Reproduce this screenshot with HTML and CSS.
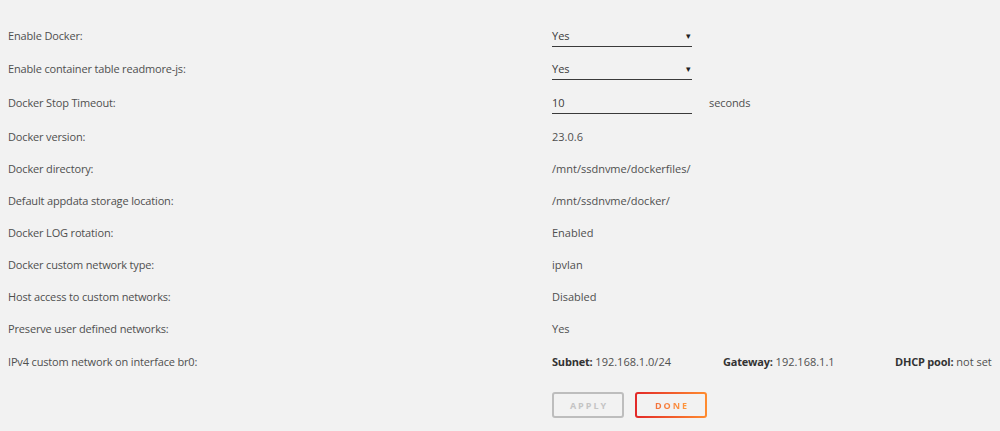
FILE: index.html
```html
<!DOCTYPE html>
<html lang="en">
<head>
    <meta charset="UTF-8">
    <title>Docker Settings</title>
    <link rel="stylesheet" href="styles.css">
</head>
<body>
    <form class="settings">
        <div class="row control">
            <div class="label">Enable Docker:</div>
            <div class="value">
                <div class="select">Yes<span class="arrow">&#9662;</span></div>
            </div>
        </div>
        <div class="row control">
            <div class="label">Enable container table readmore-js:</div>
            <div class="value">
                <div class="select">Yes<span class="arrow">&#9662;</span></div>
            </div>
        </div>
        <div class="row control spaced">
            <div class="label">Docker Stop Timeout:</div>
            <div class="value">
                <div class="select">10</div>
                <span class="unit">seconds</span>
            </div>
        </div>
        <div class="row">
            <div class="label">Docker version:</div>
            <div class="value">23.0.6</div>
        </div>
        <div class="row">
            <div class="label">Docker directory:</div>
            <div class="value">/mnt/ssdnvme/dockerfiles/</div>
        </div>
        <div class="row">
            <div class="label">Default appdata storage location:</div>
            <div class="value">/mnt/ssdnvme/docker/</div>
        </div>
        <div class="row">
            <div class="label">Docker LOG rotation:</div>
            <div class="value">Enabled</div>
        </div>
        <div class="row">
            <div class="label">Docker custom network type:</div>
            <div class="value">ipvlan</div>
        </div>
        <div class="row">
            <div class="label">Host access to custom networks:</div>
            <div class="value">Disabled</div>
        </div>
        <div class="row">
            <div class="label">Preserve user defined networks:</div>
            <div class="value">Yes</div>
        </div>
        <div class="row last">
            <div class="label">IPv4 custom network on interface br0:</div>
            <div class="value network">
                <span class="subnet"><b>Subnet:</b> 192.168.1.0/24</span>
                <span class="gateway"><b>Gateway:</b> 192.168.1.1</span>
                <span><b>DHCP pool:</b> not set</span>
            </div>
        </div>
        <div class="row buttons">
            <div class="label"></div>
            <div class="value">
                <button type="button" class="btn apply" disabled>Apply</button>
                <button type="button" class="btn done"><span>Done</span></button>
            </div>
        </div>
    </form>
</body>
</html>
```

FILE: styles.css
```css
body {
    margin: 0;
    background: #f2f2f2;
    font-family: "Open Sans", "Noto Sans", sans-serif;
    font-size: 11px;
    color: #4f4f4f;
}

.settings {
    padding: 19px 0 0 8px;
}

.row {
    display: flex;
    align-items: center;
    height: 32px;
}

.row.control {
    height: 33px;
}

.row.spaced {
    height: 35px;
}

.row.last {
    height: 34px;
}

.label {
    width: 544px;
    flex-shrink: 0;
    letter-spacing: -0.16px;
}

.value {
    display: flex;
    align-items: center;
}

.select {
    position: relative;
    width: 140px;
    height: 22px;
    line-height: 22px;
    border-bottom: 1px solid #3a3a3a;
    box-sizing: border-box;
    color: #3a3a3a;
}

.arrow {
    position: absolute;
    right: 1px;
    top: 0;
    font-size: 9px;
    color: #222;
}

.unit {
    margin-left: 17px;
    letter-spacing: -0.1px;
}

.network b {
    font-weight: 700;
    color: #333;
    letter-spacing: -0.2px;
}

.subnet {
    width: 171px;
}

.gateway {
    width: 172px;
}

.buttons {
    height: auto;
    padding-top: 14px;
}

.btn {
    width: 72px;
    height: 26px;
    margin-right: 11px;
    border-radius: 3px;
    font-family: inherit;
    font-size: 9px;
    font-weight: 700;
    letter-spacing: 2px;
    text-transform: uppercase;
    padding: 0 0 0 2px;
}

.apply {
    background: transparent;
    border: 2px solid #bdbdbd;
    color: #c4c4c4;
}

.done {
    border: 2px solid transparent;
    background: linear-gradient(#f2f2f2, #f2f2f2) padding-box,
                linear-gradient(90deg, #e22828, #ff8c2f) border-box;
}

.done span {
    background: linear-gradient(90deg, #f3703a, #ff9a3c);
    -webkit-background-clip: text;
    background-clip: text;
    color: transparent;
}
```
